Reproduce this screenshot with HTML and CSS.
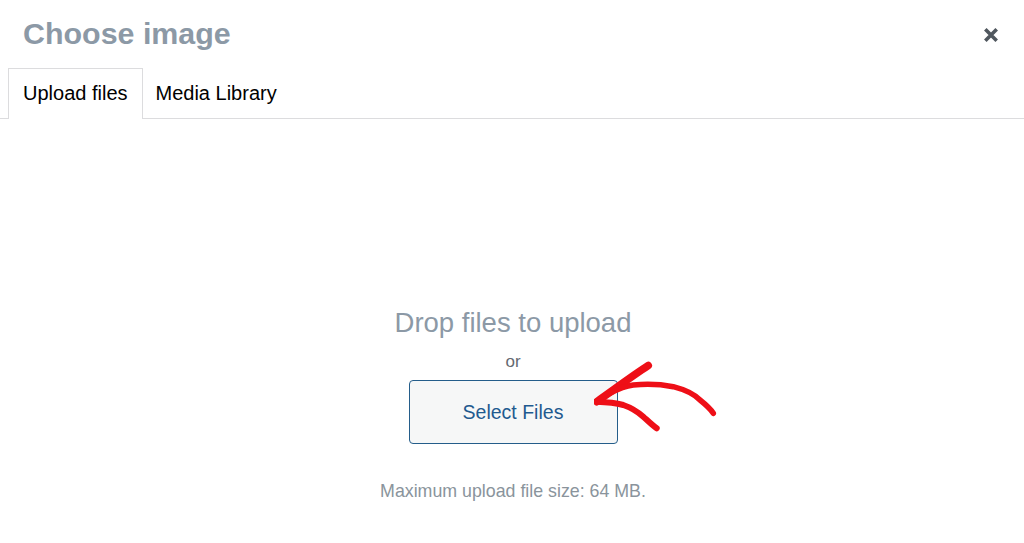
FILE: index.html
```html
<!DOCTYPE html>
<html lang="en">
<head>
<meta charset="utf-8">
<title>Choose image</title>
<link rel="stylesheet" href="styles.css">
</head>
<body>
<div class="modal">
  <header class="modal-header">
    <h1 class="modal-title">Choose image</h1>
    <button class="close" aria-label="Close">
      <svg width="16" height="16" viewBox="0 0 16 16"><path d="M2.3 2.3 L13.7 13.7 M13.7 2.3 L2.3 13.7" stroke="#50575e" stroke-width="3.6" stroke-linecap="butt"/></svg>
    </button>
  </header>
  <nav class="tabs">
    <span class="tab active">Upload files</span>
    <span class="tab">Media Library</span>
  </nav>
  <section class="upload">
    <p class="drop">Drop files to upload</p>
    <p class="or">or</p>
    <div class="btn-wrap">
      <button class="select">Select Files</button>
      <svg class="arrow" width="125" height="75" viewBox="0 0 125 75" fill="none" stroke="#ee0f17" stroke-linecap="round" stroke-linejoin="round">
        <path d="M54.3 5.5 C38 16 18 31 2.7 41.7" stroke-width="7.5"/>
        <path d="M3 41 C8 38 12 35 16 33.3 C24 29 31 26 39.3 25 C54 23.5 68 24.5 79.3 26.7 C92 30 101 35 106 40 C111 44 116 48 119.3 53.3" stroke-width="5.5"/>
        <path d="M2.7 41.7 C12 42 22 43 29.3 45 C38 48 44 52 49.3 56.7 C54 61 58 65 62.7 68.3" stroke-width="6"/>
      </svg>
    </div>
    <p class="max">Maximum upload file size: 64 MB.</p>
  </section>
</div>
</body>
</html>
```

FILE: styles.css
```css
* { box-sizing: border-box; }
html, body {
  margin: 0;
  padding: 0;
  background: #fff;
}
body {
  font-family: "Liberation Sans", Arial, Helvetica, sans-serif;
  width: 1024px;
  height: 543px;
  overflow: hidden;
}
.modal-header {
  height: 68px;
  display: flex;
  justify-content: space-between;
  align-items: flex-start;
  padding: 0 25px 0 23px;
}
.modal-title {
  margin: 0;
  padding-top: 18px;
  font-size: 30.4px;
  line-height: 30px;
  font-weight: 700;
  color: #8c99a6;
}
.close {
  margin-top: 27px;
  padding: 0;
  border: 0;
  background: none;
  width: 16px;
  height: 16px;
  display: flex;
}
.tabs {
  display: flex;
  height: 51px;
  padding-left: 8px;
  border-bottom: 1px solid #dcdcde;
}
.tab {
  display: block;
  height: 51px;
  padding: 0 14px 0 12px;
  border: 1px solid transparent;
  border-bottom: 0;
  font-size: 20px;
  line-height: 48px;
  color: #000;
}
.tab.active {
  padding: 0 14px;
  background: #fff;
  border-color: #dcdcde;
}
.upload {
  display: flex;
  flex-direction: column;
  align-items: center;
  padding-top: 187px;
  padding-left: 2px;
}
.upload p { margin: 0; }
.drop {
  font-size: 27.5px;
  line-height: 34px;
  color: #8c99a6;
}
.or {
  margin-top: 11px !important;
  font-size: 17px;
  line-height: 22px;
  color: #646970;
}
.btn-wrap {
  position: relative;
  margin-top: 7px;
}
.select {
  display: block;
  width: 209px;
  height: 64px;
  border: 1px solid #245d8a;
  border-radius: 4px;
  background: #f6f7f7;
  font-family: "Liberation Sans", Arial, Helvetica, sans-serif;
  font-size: 19.5px;
  line-height: 62px;
  color: #1f5a8f;
  padding: 0;
}
.arrow {
  position: absolute;
  left: 185px;
  top: -20px;
}
.max {
  margin-top: 36px !important;
  font-size: 17.8px;
  line-height: 22px;
  color: #8a949c;
}
```
